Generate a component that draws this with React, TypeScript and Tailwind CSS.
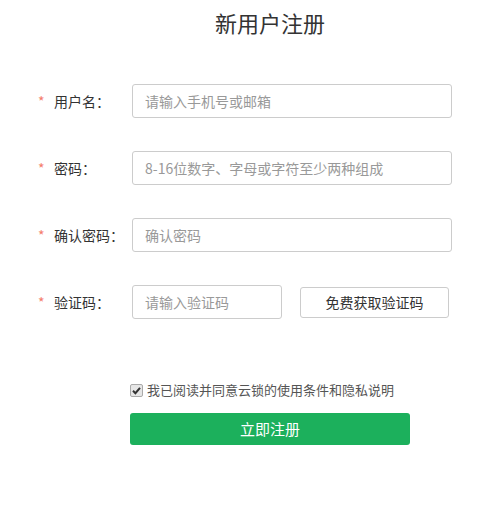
import { useState } from "react";

const fields = [
  { label: "用户名：", placeholder: "请输入手机号或邮箱", type: "text" },
  { label: "密码：", placeholder: "8-16位数字、字母或字符至少两种组成", type: "password" },
  { label: "确认密码：", placeholder: "确认密码", type: "password" },
];

function Label({ text }: { text: string }) {
  return (
    <div className="flex items-center w-[94px] shrink-0">
      <span className="w-[16px] text-[14px] text-[#f47c6c]">*</span>
      <span className="text-[14px] text-[#333]">{text}</span>
    </div>
  );
}

export default function App() {
  const [agreed, setAgreed] = useState(true);

  return (
    <div
      className="w-[488px] h-[506px] bg-white"
      style={{ fontFamily: '"Noto Sans CJK SC", "Liberation Sans", sans-serif' }}
    >
      <h1 className="pt-[6px] pl-[52px] text-center text-[22px] leading-[33px] font-normal text-[#333]">
        新用户注册
      </h1>

      <div className="mt-[45px] pl-[38px] flex flex-col gap-[33px]">
        {fields.map((f) => (
          <div key={f.label} className="flex items-center h-[34px]">
            <Label text={f.label} />
            <input
              type="text"
              placeholder={f.placeholder}
              className="w-[320px] h-[34px] px-[12px] border border-[#ccc] rounded-[3px] text-[14px] text-[#333] placeholder:text-[#999] outline-none"
            />
          </div>
        ))}

        <div className="flex items-center h-[34px]">
          <Label text="验证码：" />
          <input
            type="text"
            placeholder="请输入验证码"
            className="w-[150px] h-[34px] px-[12px] border border-[#ccc] rounded-[3px] text-[14px] text-[#333] placeholder:text-[#999] outline-none"
          />
          <button className="ml-[18px] w-[149px] h-[31px] border border-[#ccc] rounded-[3px] bg-white text-[14px] text-[#333]">
            免费获取验证码
          </button>
        </div>
      </div>

      <div className="mt-[63px] pl-[130px] flex flex-col">
        <label className="flex items-center gap-[4px] h-[16px] text-[13px] text-[#555]">
          <span className="relative w-[13px] h-[13px] shrink-0">
            <input
              type="checkbox"
              checked={agreed}
              onChange={(e) => setAgreed(e.target.checked)}
              className="peer appearance-none w-[13px] h-[13px] m-0 block border border-[#aaa] rounded-[2px] bg-[#e6e6e6]"
            />
            {agreed && (
              <svg viewBox="0 0 13 13" className="absolute inset-0 w-[13px] h-[13px] pointer-events-none">
                <path d="M3 6.8 L5.4 9.2 L10 3.8" fill="none" stroke="#333" strokeWidth="2" />
              </svg>
            )}
          </span>
          我已阅读并同意云锁的使用条件和隐私说明
        </label>
        <button className="mt-[15px] w-[280px] h-[32px] rounded-[3px] bg-[#1cb05c] text-white text-[15px]">
          立即注册
        </button>
      </div>
    </div>
  );
}
